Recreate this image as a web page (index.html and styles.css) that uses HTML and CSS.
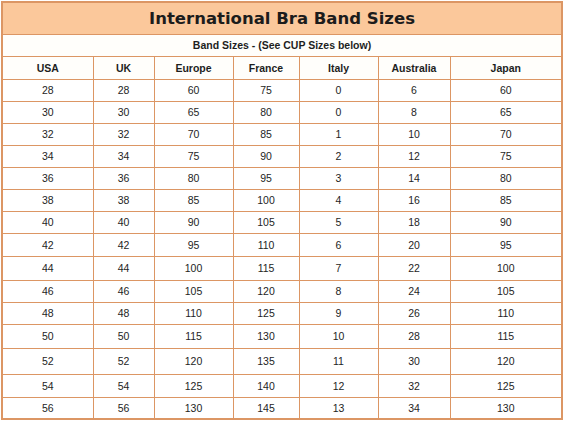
FILE: index.html
```html
<!DOCTYPE html>
<html>
<head>
<meta charset="utf-8">
<link rel="stylesheet" href="styles.css">
</head>
<body>
<table class="sizes">
  <colgroup>
    <col class="c1"><col class="c2"><col class="c3"><col class="c4"><col class="c5"><col class="c6"><col class="c7">
  </colgroup>
  <tr class="title-row"><th colspan="7" class="title">International Bra Band Sizes</th></tr>
  <tr class="sub-row"><th colspan="7" class="sub">Band Sizes - (See CUP Sizes below)</th></tr>
  <tr class="head-row"><th>USA</th><th>UK</th><th>Europe</th><th>France</th><th>Italy</th><th>Australia</th><th>Japan</th></tr>
  <tr class="r22"><td>28</td><td>28</td><td>60</td><td>75</td><td>0</td><td>6</td><td>60</td></tr>
  <tr class="r22"><td>30</td><td>30</td><td>65</td><td>80</td><td>0</td><td>8</td><td>65</td></tr>
  <tr class="r22"><td>32</td><td>32</td><td>70</td><td>85</td><td>1</td><td>10</td><td>70</td></tr>
  <tr class="r22"><td>34</td><td>34</td><td>75</td><td>90</td><td>2</td><td>12</td><td>75</td></tr>
  <tr class="r22"><td>36</td><td>36</td><td>80</td><td>95</td><td>3</td><td>14</td><td>80</td></tr>
  <tr class="r22"><td>38</td><td>38</td><td>85</td><td>100</td><td>4</td><td>16</td><td>85</td></tr>
  <tr class="r22"><td>40</td><td>40</td><td>90</td><td>105</td><td>5</td><td>18</td><td>90</td></tr>
  <tr class="r23"><td>42</td><td>42</td><td>95</td><td>110</td><td>6</td><td>20</td><td>95</td></tr>
  <tr class="r24"><td>44</td><td>44</td><td>100</td><td>115</td><td>7</td><td>22</td><td>100</td></tr>
  <tr class="r22"><td>46</td><td>46</td><td>105</td><td>120</td><td>8</td><td>24</td><td>105</td></tr>
  <tr class="r22"><td>48</td><td>48</td><td>110</td><td>125</td><td>9</td><td>26</td><td>110</td></tr>
  <tr class="r24"><td>50</td><td>50</td><td>115</td><td>130</td><td>10</td><td>28</td><td>115</td></tr>
  <tr class="r26"><td>52</td><td>52</td><td>120</td><td>135</td><td>11</td><td>30</td><td>120</td></tr>
  <tr class="r23"><td>54</td><td>54</td><td>125</td><td>140</td><td>12</td><td>32</td><td>125</td></tr>
  <tr class="r22"><td>56</td><td>56</td><td>130</td><td>145</td><td>13</td><td>34</td><td>130</td></tr>
</table>
</body>
</html>
```
FILE: styles.css
```css
html, body {
  margin: 0;
  padding: 0;
  background: #ffffff;
}
body {
  padding: 1px 0 0 1px;
}
.sizes {
  border-collapse: collapse;
  table-layout: fixed;
  width: 560px;
  font-family: "Liberation Sans", Arial, sans-serif;
  font-size: 10.5px;
  color: #1e1e1e;
  border: 2px solid #dc9664;
}
.c1 { width: 91px; }
.c2 { width: 61px; }
.c3 { width: 79px; }
.c4 { width: 66px; }
.c5 { width: 79px; }
.c6 { width: 72px; }
.c7 { width: 112px; }
.sizes th, .sizes td {
  border: 1px solid #dc9664;
  padding: 0;
  text-align: center;
  vertical-align: middle;
}
.title {
  background: #fbc89b;
  font-family: "DejaVu Sans", Verdana, sans-serif;
  font-size: 16.5px;
  font-weight: bold;
  color: #1c1c1c;
  border-bottom: 2px solid #dc9664;
}
.title-row { height: 32px; }
.sub-row { height: 22px; }
.head-row { height: 23px; }
.sub, .head-row th {
  font-weight: bold;
  font-size: 10.5px;
  background: #fffefb;
}
.r22 { height: 22px; }
.r23 { height: 23px; }
.r24 { height: 24px; }
.r26 { height: 26px; }
```
